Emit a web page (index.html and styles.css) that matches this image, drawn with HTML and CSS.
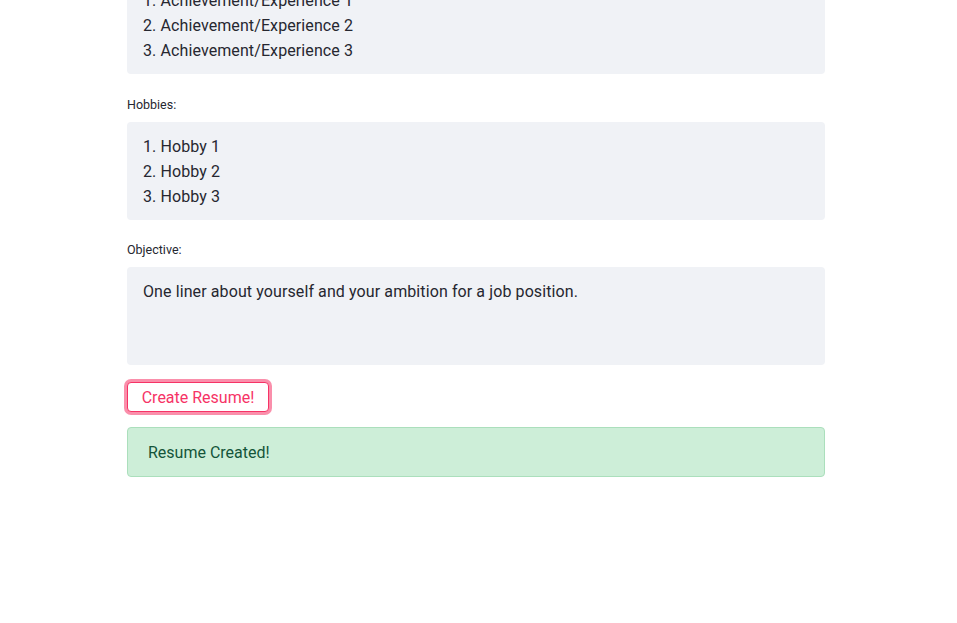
FILE: index.html
```html
<!DOCTYPE html>
<html>
<head>
<meta charset="utf-8">
<link rel="stylesheet" href="styles.css">
</head>
<body>
<main class="page">
  <div class="field">
    <div class="textarea">1. Achievement/Experience 1<br>2. Achievement/Experience 2<br>3. Achievement/Experience 3</div>
  </div>
  <div class="field field-mid">
    <label class="label">Hobbies:</label>
    <div class="textarea">1. Hobby 1<br>2. Hobby 2<br>3. Hobby 3</div>
  </div>
  <div class="field field-last">
    <label class="label">Objective:</label>
    <div class="textarea">One liner about yourself and your ambition for a job position.</div>
  </div>
  <div class="btn-row">
    <button class="btn">Create Resume!</button>
  </div>
  <div class="alert">Resume Created!</div>
</main>
</body>
</html>
```

FILE: styles.css
```css
html, body {
  margin: 0;
  padding: 0;
  background: #ffffff;
}
body {
  font-family: Roboto, "Noto Sans", sans-serif;
  color: #262730;
  overflow: hidden;
}
.page {
  width: 698px;
  margin-left: 127px;
  margin-top: -24px;
  display: flex;
  flex-direction: column;
}
.field {
  display: flex;
  flex-direction: column;
  margin-bottom: 21px;
}
.field-mid { margin-bottom: 20px; }
.field-last { margin-bottom: 17px; }
.label {
  font-size: 12.5px;
  line-height: 19px;
  margin-bottom: 8px;
  color: #262730;
}
.textarea {
  box-sizing: border-box;
  height: 98px;
  background: #f0f2f6;
  border-radius: 4px;
  padding: 11.5px 16px;
  font-size: 16px;
  line-height: 25px;
  letter-spacing: 0.1px;
}
.btn-row {
  display: flex;
  margin-bottom: 15px;
}
.btn {
  box-sizing: border-box;
  height: 30px;
  width: 142px;
  padding: 0;
  border: 1px solid #f63366;
  border-radius: 4px;
  background: #ffffff;
  color: #f63366;
  font-family: inherit;
  font-size: 16px;
  box-shadow: 0 0 0 3px rgba(246, 51, 102, 0.55);
  cursor: pointer;
}
.alert {
  box-sizing: border-box;
  height: 50px;
  padding: 0 20px;
  display: flex;
  align-items: center;
  background: #cdeed8;
  border: 1px solid #abdfbc;
  border-radius: 4px;
  color: #14553a;
  font-size: 16px;
}
```
